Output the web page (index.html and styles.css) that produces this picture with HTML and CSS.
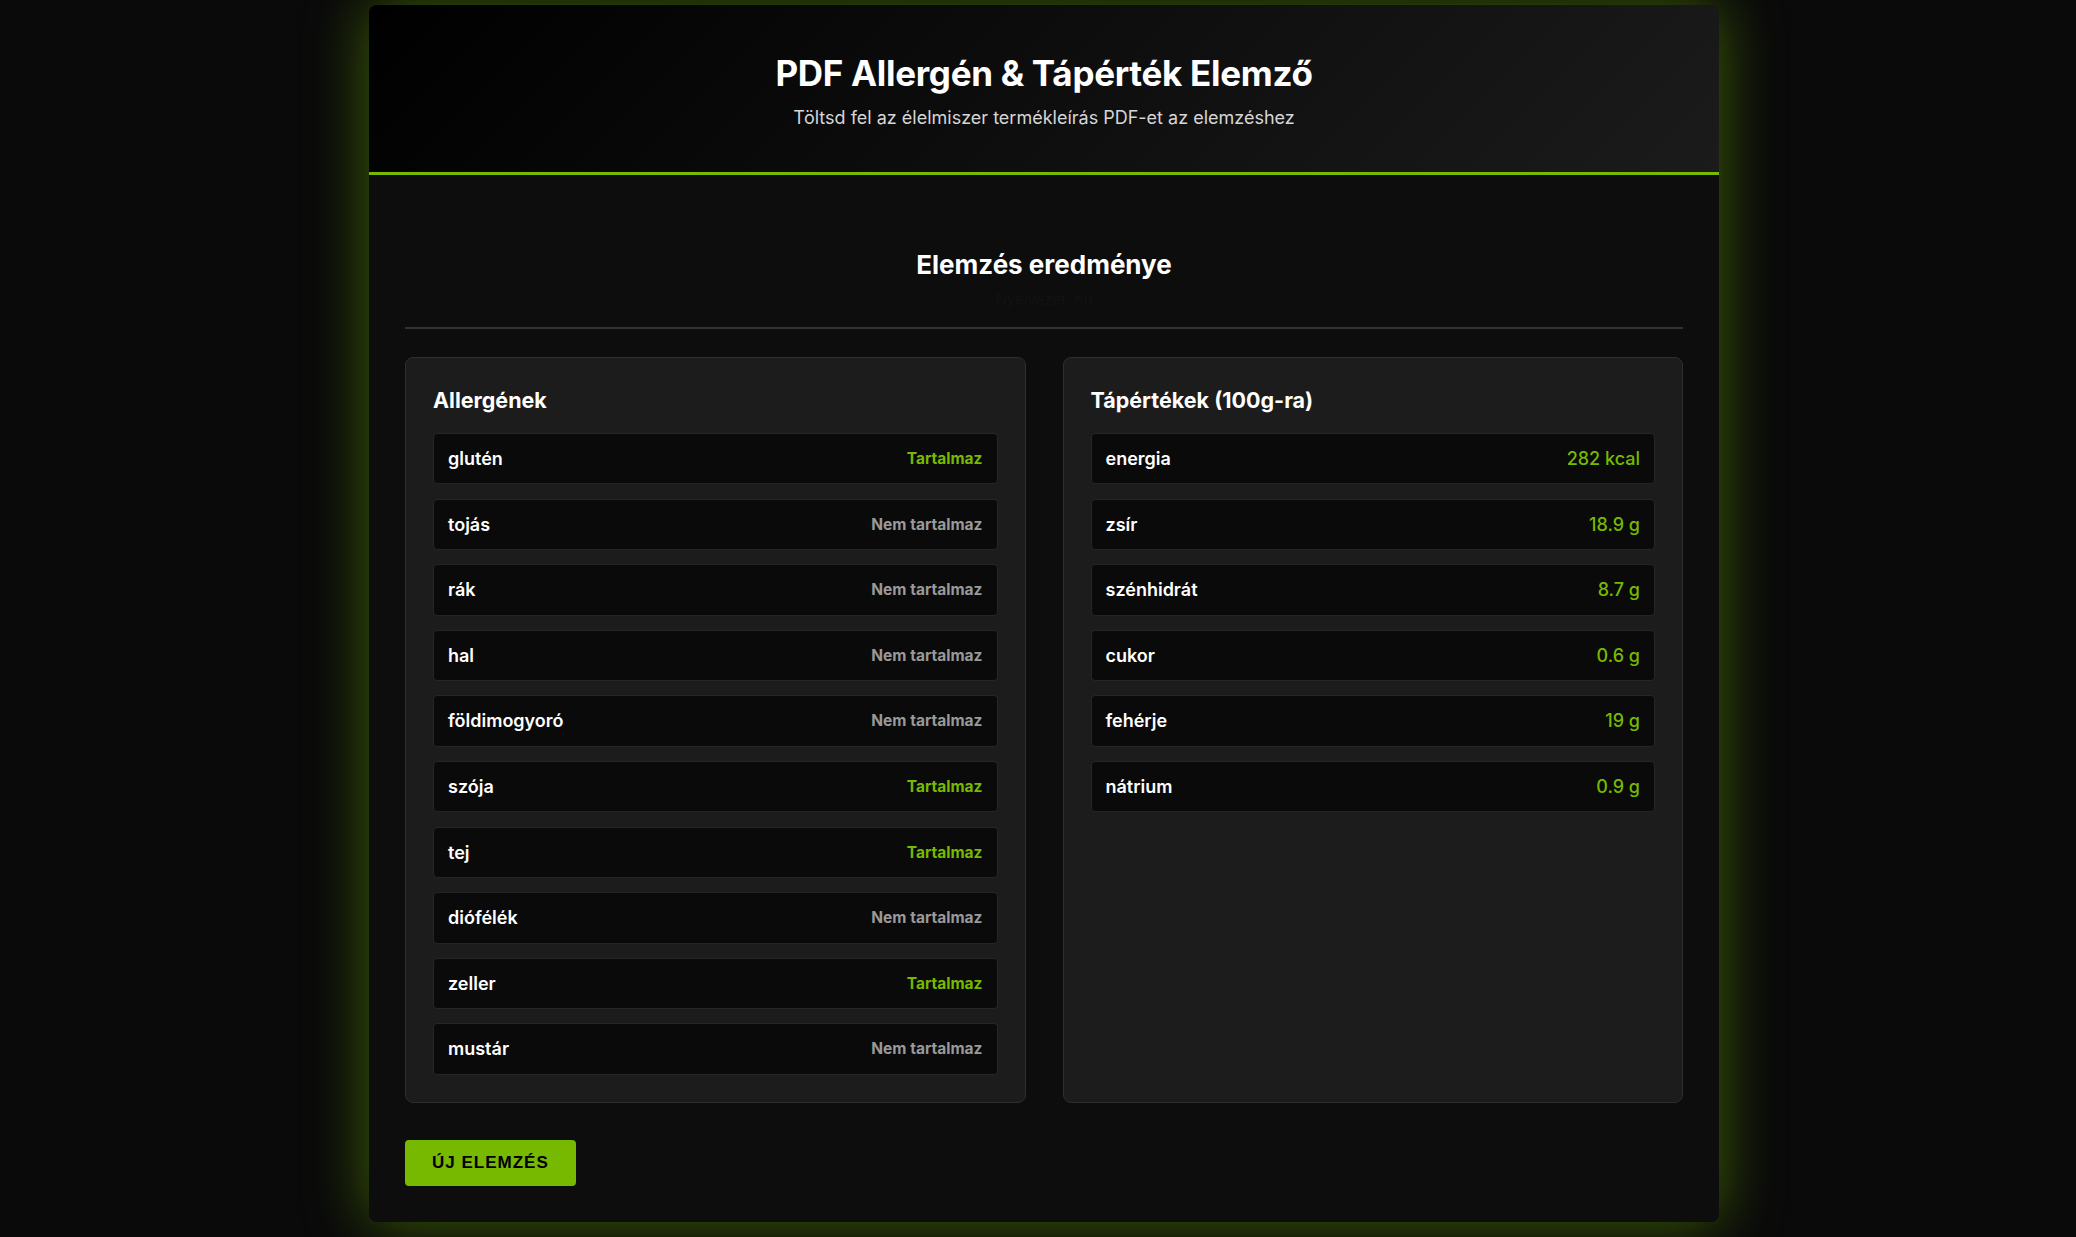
FILE: index.html
```html
<!DOCTYPE html>
<html lang="hu">
<head>
<meta charset="utf-8">
<title>PDF Allergén &amp; Tápérték Elemző</title>
<link rel="stylesheet" href="styles.css">
</head>
<body>
<div class="page">
  <div class="container">
    <header class="header">
      <h1 class="title">PDF Allergén &amp; Tápérték Elemző</h1>
      <p class="subtitle">Töltsd fel az élelmiszer termékleírás PDF-et az elemzéshez</p>
    </header>
    <main class="main">
      <div class="results-head">
        <h2 class="results-title">Elemzés eredménye</h2>
        <p class="lang">Nyelvezet: hu</p>
      </div>
      <div class="grid">
        <section class="card">
          <h3 class="card-title">Allergének</h3>
          <ul class="rows">
            <li class="row"><span class="label">glutén</span><span class="status yes">Tartalmaz</span></li>
            <li class="row"><span class="label">tojás</span><span class="status no">Nem tartalmaz</span></li>
            <li class="row"><span class="label">rák</span><span class="status no">Nem tartalmaz</span></li>
            <li class="row"><span class="label">hal</span><span class="status no">Nem tartalmaz</span></li>
            <li class="row"><span class="label">földimogyoró</span><span class="status no">Nem tartalmaz</span></li>
            <li class="row"><span class="label">szója</span><span class="status yes">Tartalmaz</span></li>
            <li class="row"><span class="label">tej</span><span class="status yes">Tartalmaz</span></li>
            <li class="row"><span class="label">diófélék</span><span class="status no">Nem tartalmaz</span></li>
            <li class="row"><span class="label">zeller</span><span class="status yes">Tartalmaz</span></li>
            <li class="row"><span class="label">mustár</span><span class="status no">Nem tartalmaz</span></li>
          </ul>
        </section>
        <section class="card">
          <h3 class="card-title">Tápértékek (100g-ra)</h3>
          <ul class="rows">
            <li class="row"><span class="label">energia</span><span class="value">282 kcal</span></li>
            <li class="row"><span class="label">zsír</span><span class="value">18.9 g</span></li>
            <li class="row"><span class="label">szénhidrát</span><span class="value">8.7 g</span></li>
            <li class="row"><span class="label">cukor</span><span class="value">0.6 g</span></li>
            <li class="row"><span class="label">fehérje</span><span class="value">19 g</span></li>
            <li class="row"><span class="label">nátrium</span><span class="value">0.9 g</span></li>
          </ul>
        </section>
      </div>
      <button class="btn" type="button">Új elemzés</button>
    </main>
  </div>
</div>
</body>
</html>
```

FILE: styles.css
```css
html, body {
  margin: 0;
  padding: 0;
  background: #0a0a0a;
}
body {
  font-family: "Inter", "Liberation Sans", sans-serif;
  color: #fff;
}
.page {
  padding: 5px 0 16px 12px;
}
.container {
  max-width: 1350px;
  margin: 0 auto;
  background: #0d0d0d;
  border-radius: 8px;
  box-shadow: 0 0 60px rgba(118, 185, 0, 0.5);
  overflow: hidden;
}
.header {
  box-sizing: content-box;
  height: 120px;
  padding-top: 47px;
  text-align: center;
  background: linear-gradient(135deg, #000 0%, #1b1b1b 100%);
  border-bottom: 3px solid #76b900;
}
.title {
  margin: 0;
  font-size: 35px;
  line-height: 42px;
  font-weight: 700;
  color: #fff;
  letter-spacing: -0.3px;
}
.subtitle {
  margin: 13px 0 0;
  font-size: 18px;
  line-height: 22px;
  color: #d6d6d6;
}
.main {
  padding: 74px 36px 36px;
}
.results-head {
  text-align: center;
  padding-bottom: 17px;
  border-bottom: 2px solid #333;
}
.results-title {
  margin: 0;
  font-size: 26px;
  line-height: 32px;
  font-weight: 700;
}
.lang {
  margin: 9px 0 0;
  font-size: 15px;
  line-height: 20px;
  color: #121212;
}
.grid {
  display: grid;
  grid-template-columns: 1fr 1fr;
  gap: 37px;
  margin-top: 28px;
}
.card {
  background: #1c1c1c;
  border: 1px solid #2e2e2e;
  border-radius: 8px;
  padding: 29px 27px 27px;
}
.card-title {
  margin: 0 0 20px;
  font-size: 21.5px;
  line-height: 26px;
  font-weight: 700;
}
.rows {
  list-style: none;
  margin: 0;
  padding: 0;
  display: flex;
  flex-direction: column;
  gap: 14.2px;
}
.row {
  display: flex;
  justify-content: space-between;
  align-items: center;
  padding: 15px 14px;
  line-height: 19.4px;
  background: #0a0a0a;
  border: 1px solid #262626;
  border-radius: 4px;
}
.label {
  font-size: 18px;
  font-weight: 600;
  color: #fff;
}
.status {
  font-size: 15.5px;
  font-weight: 700;
}
.status.yes {
  color: #76b900;
}
.status.no {
  color: #999;
}
.value {
  font-size: 18px;
  font-weight: 500;
  color: #76b900;
}
.btn {
  display: block;
  margin-top: 37px;
  height: 46px;
  padding: 0 27px;
  background: #76b900;
  color: #000;
  border: 0;
  border-radius: 4px;
  font-family: "Liberation Sans", Arial, sans-serif;
  font-size: 17px;
  font-weight: 700;
  letter-spacing: 1px;
  text-transform: uppercase;
}
```
